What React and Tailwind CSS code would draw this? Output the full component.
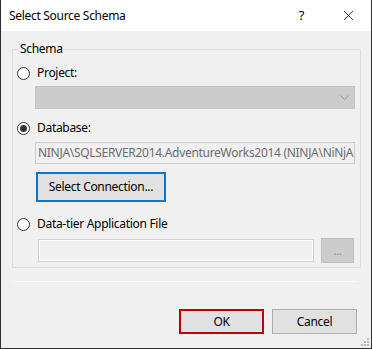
import { X } from "lucide-react";

const FONT = "font-['Noto_Sans',sans-serif] tracking-[-0.3px]";

function Radio({ checked }) {
  return (
    <span className="flex h-[13px] w-[13px] shrink-0 items-center justify-center rounded-full border border-[#333333] bg-white">
      {checked && <span className="h-[7px] w-[7px] rounded-full bg-[#333333]" />}
    </span>
  );
}

function RadioRow({ checked, label }) {
  return (
    <div className="flex h-[16px] items-center gap-[7px] pl-[4px]">
      <Radio checked={checked} />
      <span className="text-[12px] leading-[16px] text-black">{label}</span>
    </div>
  );
}

function Grip() {
  return (
    <svg width="8" height="8" viewBox="0 0 8 8" className="absolute right-[2px] bottom-[2px]">
      <rect x="6" y="0" width="2" height="2" fill="#b5b5b5" />
      <rect x="3" y="3" width="2" height="2" fill="#b5b5b5" />
      <rect x="6" y="3" width="2" height="2" fill="#b5b5b5" />
      <rect x="0" y="6" width="2" height="2" fill="#b5b5b5" />
      <rect x="3" y="6" width="2" height="2" fill="#b5b5b5" />
      <rect x="6" y="6" width="2" height="2" fill="#b5b5b5" />
    </svg>
  );
}

export default function App() {
  return (
    <div className={`${FONT} relative flex h-[349px] w-[372px] flex-col border-x border-b border-[#2f2f2f] bg-[#f0f0f0]`}>
      <div className="flex h-[31px] items-center bg-white pl-[8px]">
        <span className="flex-1 text-[12px] text-black">Select Source Schema</span>
        <span className="mr-[36px] text-[13px] text-black">?</span>
        <X size={17} strokeWidth={1.1} className="mr-[14px] text-black" />
      </div>

      <div className="relative mt-[18px] ml-[11px] h-[219px] w-[349px] border border-[#dcdcdc]">
        <span className="absolute top-[-9px] left-[6px] bg-[#f0f0f0] px-[1px] text-[12px] leading-[16px] text-black">
          Schema
        </span>

        <div className="flex flex-col pt-[15px]">
          <RadioRow label="Project:" />
          <div className="mt-[5px] ml-[22px] flex h-[23px] w-[320px] items-center justify-end border border-[#c4c4c4] bg-[#cccccc] pr-[5px]">
            <svg width="9" height="5" viewBox="0 0 9 5">
              <path d="M0.5 0.5 L4.5 4.5 L8.5 0.5" fill="none" stroke="#9a9a9a" strokeWidth="1" />
            </svg>
          </div>

          <div className="mt-[11px]">
            <RadioRow checked label="Database:" />
          </div>
          <div className="mt-[6px] ml-[22px] flex h-[22px] w-[320px] items-center overflow-hidden border border-[#cccccc] bg-[#f0f0f0] pl-[2px]">
            <span className="text-[12px] whitespace-nowrap text-[#6d6d6d]">
              NINJA\SQLSERVER2014.AdventureWorks2014 (NINJA\NiNjA
            </span>
          </div>
          <button className="mt-[8px] ml-[23px] flex h-[30px] w-[130px] items-center justify-center border-2 border-[#0078d7] bg-[#e1e1e1] text-[12px] text-black">
            Select Connection...
          </button>

          <div className="mt-[14px]">
            <RadioRow label="Data-tier Application File" />
          </div>
          <div className="mt-[6px] ml-[25px] flex items-center gap-[7px]">
            <div className="h-[23px] w-[276px] border border-[#cfcfcf] bg-[#f0f0f0] shadow-[inset_0_0_0_1px_#ffffff]" />
            <div className="flex h-[25px] w-[33px] items-center justify-center border border-[#bfbfbf] bg-[#cccccc] text-[11px] leading-none text-[#8a8a8a]">
              ...
            </div>
          </div>
        </div>
      </div>

      <div className="mt-[13px] ml-[13px] h-px w-[344px] bg-[#fafafa]" />

      <div className="mt-[27px] flex justify-end gap-[8px] pr-[14px]">
        <button className="flex h-[25px] w-[85px] items-center justify-center border-2 border-[#c00000] bg-[#e1e1e1] text-[12px] text-black">
          OK
        </button>
        <button className="flex h-[25px] w-[85px] items-center justify-center border border-[#adadad] bg-[#e1e1e1] text-[12px] text-black">
          Cancel
        </button>
      </div>

      <Grip />
    </div>
  );
}
